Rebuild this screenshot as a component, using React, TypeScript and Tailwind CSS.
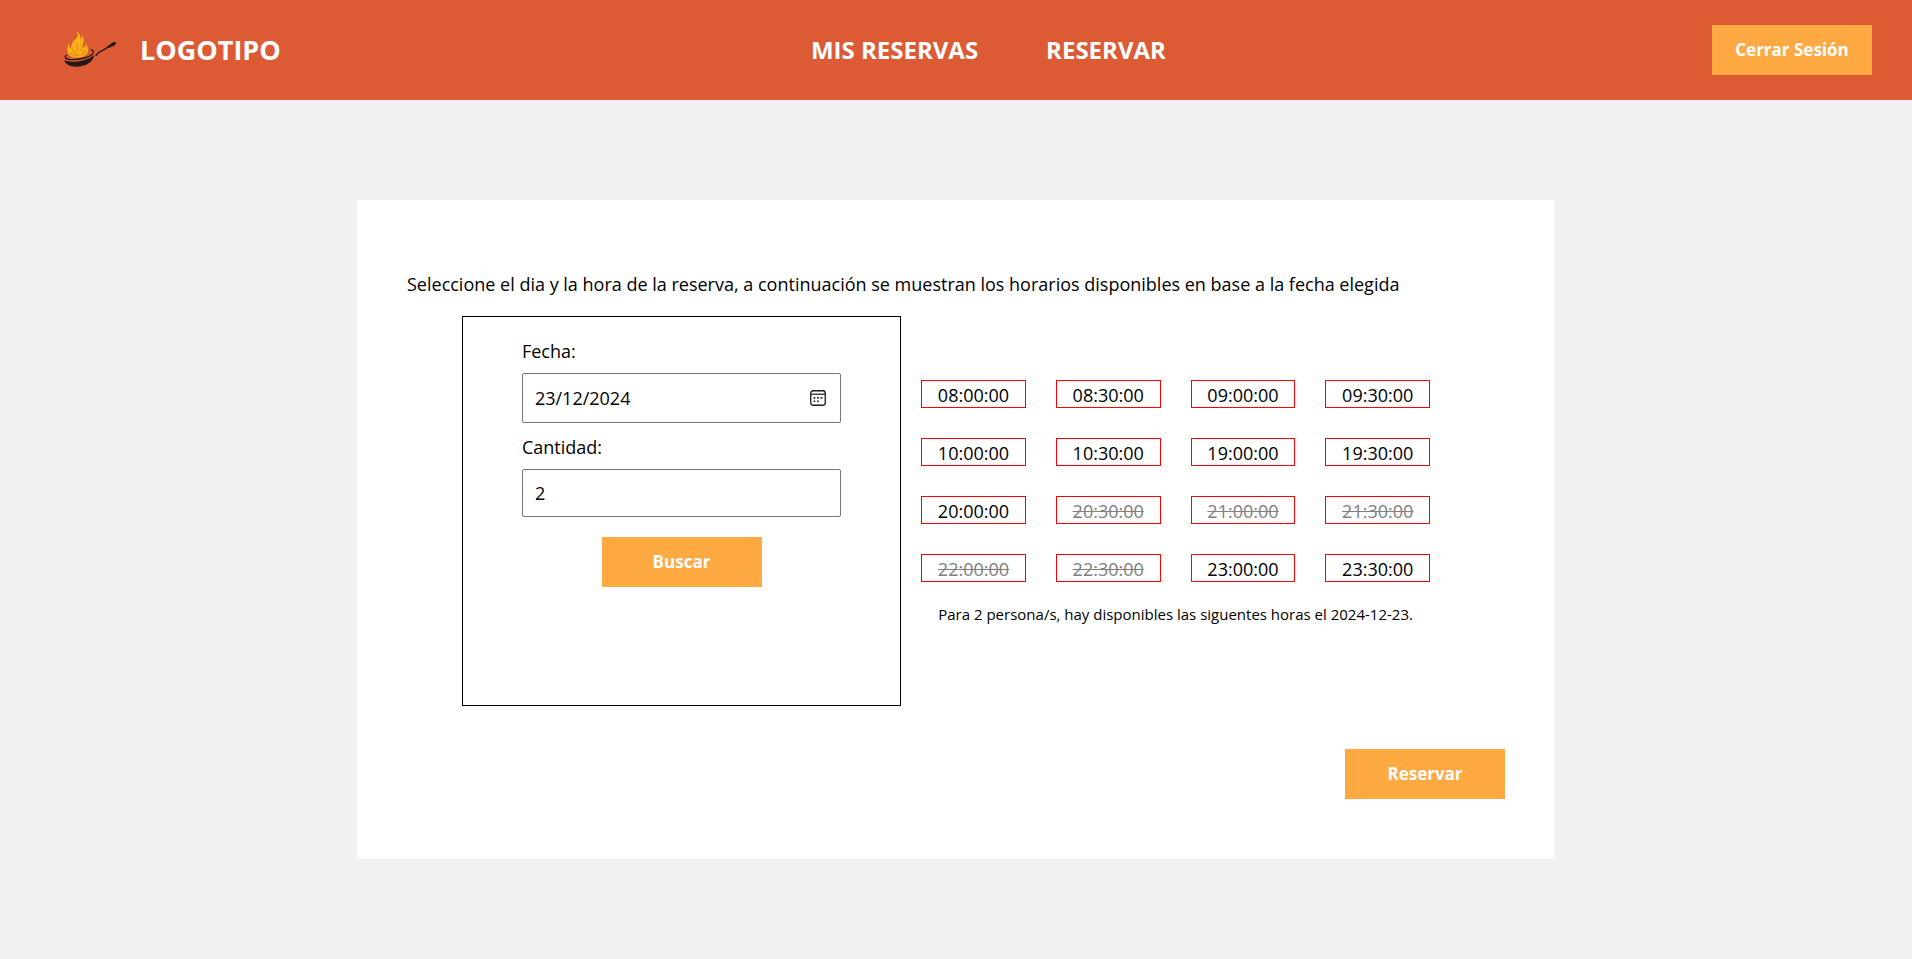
import { useState } from "react";

const slots: { time: string; taken?: boolean }[] = [
  { time: "08:00:00" },
  { time: "08:30:00" },
  { time: "09:00:00" },
  { time: "09:30:00" },
  { time: "10:00:00" },
  { time: "10:30:00" },
  { time: "19:00:00" },
  { time: "19:30:00" },
  { time: "20:00:00" },
  { time: "20:30:00", taken: true },
  { time: "21:00:00", taken: true },
  { time: "21:30:00", taken: true },
  { time: "22:00:00", taken: true },
  { time: "22:30:00", taken: true },
  { time: "23:00:00" },
  { time: "23:30:00" },
];

const buttonClass =
  "h-[50px] w-40 shrink-0 cursor-pointer bg-[#ffa943] text-[17px] font-bold text-white";

function PanLogo() {
  return (
    <svg viewBox="0 0 240 180" className="h-[60px] w-20" aria-hidden="true">
      <path
        d="M58 106C50 94 50 80 58 69c-1 8 1 13 5 16 1-13 4-18 11-25 9-8 12-15 4-27 12 7 15 16 12 25 4-3 6-7 5-12 8 9 8 16 4 24-2 6-1 10 3 13 4-2 5-7 4-14 8 9 11 23 5 33-8 12-44 15-53 4z"
        fill="#fcb116"
      />
      <path
        d="M66 82c0 8 3 12 6 16M82 68c-4 9-1 15 2 22M95 76c2 7 0 12-3 17M103 90c0 5-2 8-5 11M76 94c2 5 4 7 7 9"
        fill="none"
        stroke="#e8741f"
        strokeWidth="2.5"
      />
      <path
        d="M61 100c8 8 38 8 48-3"
        fill="none"
        stroke="#f58a1b"
        strokeWidth="4"
      />
      <path
        d="M49 106c-7 5-3 12 14 13 28 1 58-8 66-19 3-5 1-9-5-10"
        fill="none"
        stroke="#231a14"
        strokeWidth="4"
        strokeLinecap="round"
      />
      <path
        d="M43 121c26 9 66 3 90-16-4 22-27 35-54 35-19 0-33-7-36-19z"
        fill="#231a14"
      />
      <path
        d="M138 107c4-8 10-12 20-16 9-4 14-8 22-15"
        fill="none"
        stroke="#231a14"
        strokeWidth="4.5"
        strokeLinecap="round"
      />
      <path
        d="M174 81c5-5 10-14 18-15 5-1 8 3 5 7-4 6-13 7-20 11z"
        fill="#231a14"
      />
    </svg>
  );
}

function CalendarIcon() {
  return (
    <svg viewBox="0 0 16 16" className="size-4" fill="none" aria-hidden="true">
      <rect x="0.75" y="0.75" width="14.5" height="14.5" rx="2.5" stroke="#1b1b1b" strokeWidth="1.3" />
      <path d="M1 4.2h14" stroke="#1b1b1b" strokeWidth="1.2" />
      <path
        d="M3.6 7h1.7v1.7H3.6zM7.1 7h1.7v1.7H7.1zM10.6 7h1.7v1.7h-1.7zM3.6 10.4h1.7v1.7H3.6zM7.1 10.4h1.7v1.7H7.1z"
        fill="#1b1b1b"
      />
    </svg>
  );
}

export default function App() {
  const [date, setDate] = useState("23/12/2024");
  const [count, setCount] = useState("2");

  return (
    <div className="flex min-h-screen flex-col bg-[#f2f0f1] font-['Open_Sans','Noto_Sans',sans-serif] text-[18px] text-black">
      <header className="flex h-[100px] items-center justify-between bg-[#dc5a34] px-10 text-white">
        <a href="#inicio" className="flex items-center gap-2.5 pl-2.5 text-[27px] font-bold">
          <PanLogo />
          LOGOTIPO
        </a>
        <nav className="flex items-center gap-[68px] pr-4 text-[24px] font-bold">
          <a href="#mis-reservas">MIS RESERVAS</a>
          <a href="#reservar">RESERVAR</a>
        </nav>
        <button type="button" className={buttonClass}>
          Cerrar Sesión
        </button>
      </header>

      <main className="flex flex-1 justify-center py-[100px]">
        <section className="flex w-full max-w-[1198px] flex-col bg-white px-[50px] pt-[68px] pb-[60px]">
          <p className="leading-8">
            Seleccione el dia y la hora de la reserva, a continuación se muestran los horarios
            disponibles en base a la fecha elegida
          </p>

          <div className="mt-4 flex justify-center">
            <form
              className="flex h-[390px] w-2/5 flex-col border border-black px-[59px] pt-[18px]"
              onSubmit={(e) => e.preventDefault()}
            >
              <label htmlFor="fecha" className="leading-8">
                Fecha:
              </label>
              <div className="mt-1.5 flex h-[50px] items-center rounded-[2px] border border-[#767676] pr-3.5 pl-3">
                <input
                  id="fecha"
                  type="text"
                  value={date}
                  onChange={(e) => setDate(e.target.value)}
                  className="min-w-0 flex-1 outline-none"
                />
                <button type="button" aria-label="Abrir calendario" className="cursor-pointer">
                  <CalendarIcon />
                </button>
              </div>
              <label htmlFor="cantidad" className="mt-2 leading-8">
                Cantidad:
              </label>
              <input
                id="cantidad"
                type="text"
                inputMode="numeric"
                value={count}
                onChange={(e) => setCount(e.target.value)}
                className="mt-1.5 h-12 rounded-[2px] border border-[#767676] px-3 outline-none"
              />
              <button type="submit" className={`${buttonClass} mt-5 self-center`}>
                Buscar
              </button>
            </form>

            <div className="w-1/2 px-5 pt-16">
              <ul className="grid grid-cols-4 gap-[30px]">
                {slots.map(({ time, taken }) => (
                  <li key={time}>
                    <button
                      type="button"
                      disabled={taken}
                      className={`block h-7 w-full border border-[#ff0000] pt-0.5 leading-6 ${
                        taken ? "text-[#808080] line-through" : "cursor-pointer"
                      }`}
                    >
                      {time}
                    </button>
                  </li>
                ))}
              </ul>
              <p className="mt-5 text-center text-[15px] leading-6">
                Para 2 persona/s, hay disponibles las siguentes horas el 2024-12-23.
              </p>
            </div>
          </div>

          <button type="button" className={`${buttonClass} mt-auto self-end`}>
            Reservar
          </button>
        </section>
      </main>
    </div>
  );
}
